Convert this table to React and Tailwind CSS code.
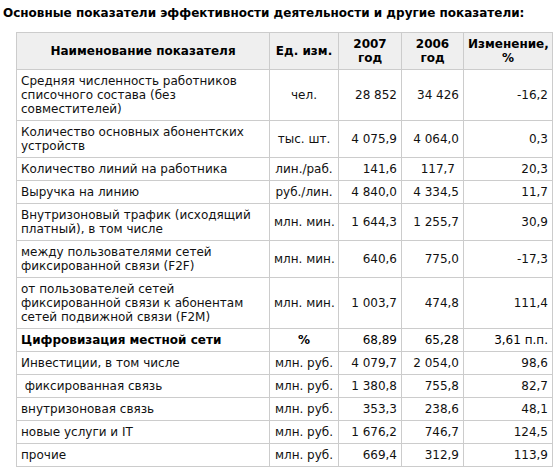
const rows = [
  { name: 'Средняя численность работников списочного состава (без совместителей)', unit: 'чел.', y07: '28 852', y06: '34 426', diff: '-16,2' },
  { name: 'Количество основных абонентских устройств', unit: 'тыс. шт.', y07: '4 075,9', y06: '4 064,0', diff: '0,3' },
  { name: 'Количество линий на работника', unit: 'лин./раб.', y07: '141,6', y06: '117,7', diff: '20,3', pad06: true },
  { name: 'Выручка на линию', unit: 'руб./лин.', y07: '4 840,0', y06: '4 334,5', diff: '11,7' },
  { name: 'Внутризоновый трафик (исходящий платный), в том числе', unit: 'млн. мин.', y07: '1 644,3', y06: '1 255,7', diff: '30,9' },
  { name: 'между пользователями сетей фиксированной связи (F2F)', unit: 'млн. мин.', y07: '640,6', y06: '775,0', diff: '-17,3' },
  { name: 'от пользователей сетей фиксированной связи к абонентам сетей подвижной связи (F2M)', unit: 'млн. мин.', y07: '1 003,7', y06: '474,8', diff: '111,4' },
  { name: 'Цифровизация местной сети', unit: '%', y07: '68,89', y06: '65,28', diff: '3,61 п.п.', bold: true },
  { name: 'Инвестиции, в том числе', unit: 'млн. руб.', y07: '4 079,7', y06: '2 054,0', diff: '98,6' },
  { name: '\u00a0фиксированная связь', unit: 'млн. руб.', y07: '1 380,8', y06: '755,8', diff: '82,7' },
  { name: 'внутризоновая связь', unit: 'млн. руб.', y07: '353,3', y06: '238,6', diff: '48,1' },
  { name: 'новые услуги и IT', unit: 'млн. руб.', y07: '1 676,2', y06: '746,7', diff: '124,5' },
  { name: 'прочие', unit: 'млн. руб.', y07: '669,4', y06: '312,9', diff: '113,9' },
];

const cell = 'border border-[#cccccc] px-[4px] py-[4px] align-middle';

export default function App() {
  return (
    <div className="w-[560px] h-[474px] bg-white text-[#111] font-['DejaVu_Sans','Verdana',sans-serif] text-[12px] leading-[14px] overflow-hidden">
      <h2 className="pl-[3px] pt-[5px] text-[12px] leading-[16px] font-bold text-black">
        Основные показатели эффективности деятельности и другие показатели:
      </h2>

      {/* table */}
      <table className="ml-[16px] mt-[11px] w-[536px] table-fixed border-collapse">
        <colgroup>
          <col className="w-[253px]" />
          <col className="w-[69px]" />
          <col className="w-[63px]" />
          <col className="w-[62px]" />
          <col className="w-[89px]" />
        </colgroup>
        <thead>
          <tr className="bg-[#efefef] font-bold text-black">
            <th className={`${cell} text-center`}>Наименование показателя</th>
            <th className={`${cell} text-center`}>Ед. изм.</th>
            <th className={`${cell} text-center`}>2007<br />год</th>
            <th className={`${cell} text-center`}>2006<br />год</th>
            <th className={`${cell} text-center`}>Изменение,<br />%</th>
          </tr>
        </thead>
        <tbody>
          {rows.map((r) => (
            <tr key={r.name} className={r.bold ? 'font-bold text-black' : ''}>
              <td className={`${cell} text-left`}>{r.name}</td>
              <td className={`${cell} text-center whitespace-nowrap ${r.bold ? '' : 'font-normal'}`}>{r.unit}</td>
              <td className={`${cell} text-right whitespace-nowrap font-normal`}>{r.y07}</td>
              <td className={`${cell} text-right whitespace-nowrap font-normal ${r.pad06 ? 'pr-[8px]' : ''}`}>{r.y06}</td>
              <td className={`${cell} text-right whitespace-nowrap font-normal`}>{r.diff}</td>
            </tr>
          ))}
        </tbody>
      </table>
    </div>
  );
}
